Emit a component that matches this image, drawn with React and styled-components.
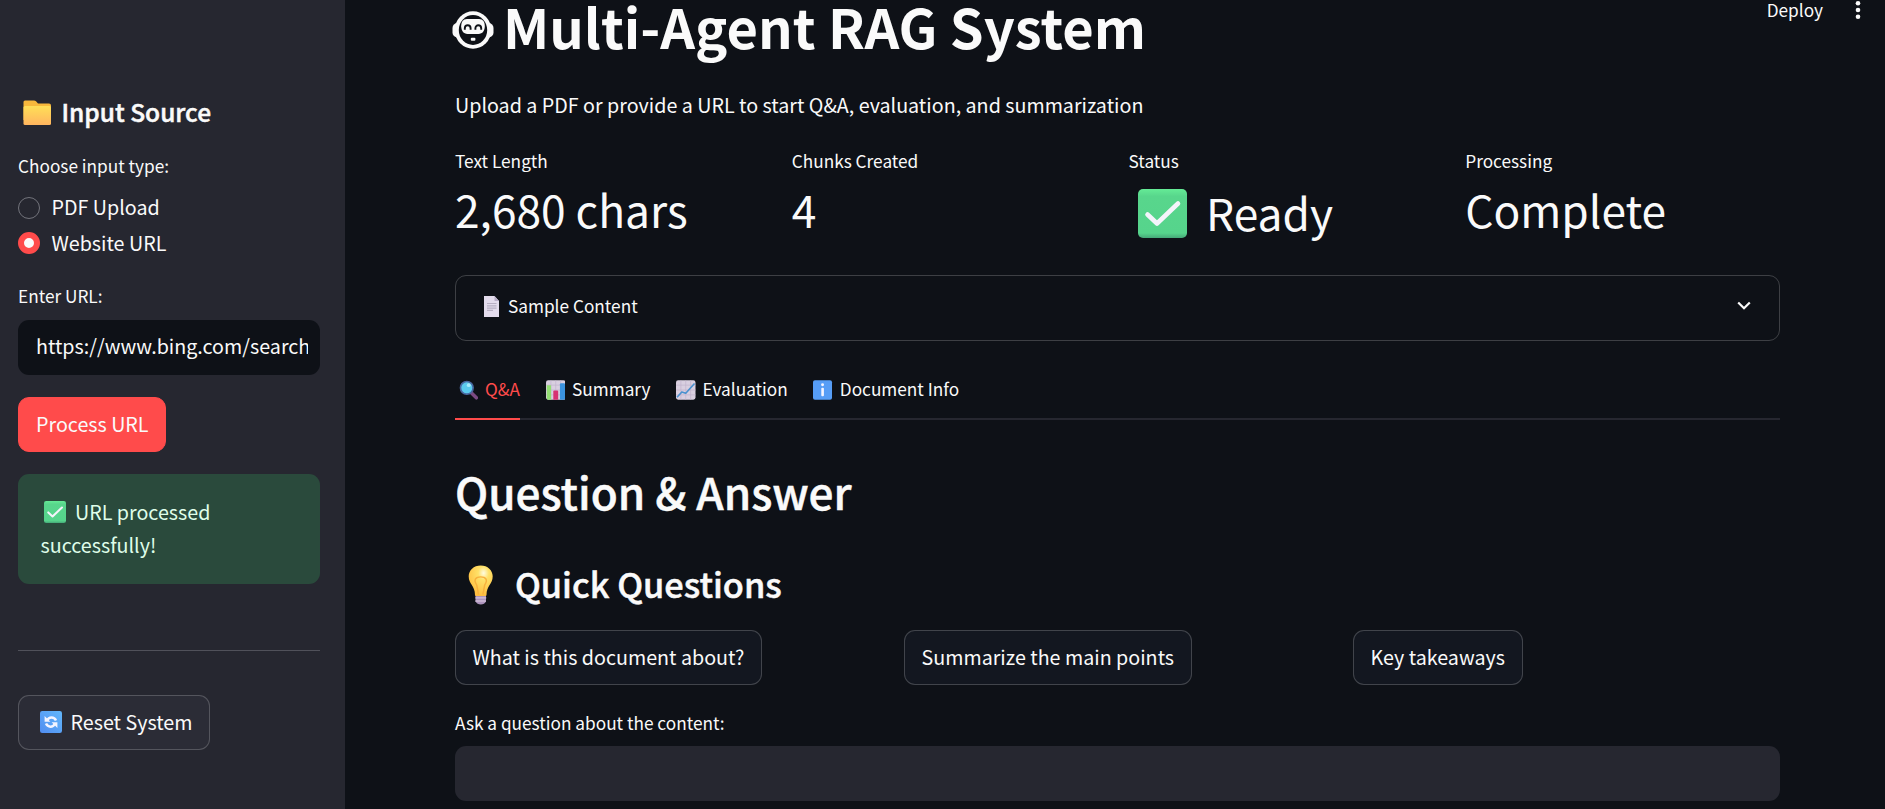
import React from 'react';
import styled, { createGlobalStyle, css } from 'styled-components';

const GlobalStyle = createGlobalStyle`
  * { box-sizing: border-box; }
  body {
    margin: 0;
    background: #0e1117;
    color: #fafafa;
    font-family: "Noto Sans CJK SC", "Noto Sans", sans-serif;
    font-size: 19.7px;
    overflow: hidden;
  }
  button, input { font: inherit; color: inherit; }
  svg { display: block; flex: none; }
`;

/* ---------- shell ---------- */

const Page = styled.div`
  display: flex;
  height: 809px;
  overflow: hidden;
`;

const Sidebar = styled.aside`
  flex: none;
  width: 345px;
  padding: 94px 25px 0 18px;
  background: #262730;
  display: flex;
  flex-direction: column;
  align-items: flex-start;
`;

const Main = styled.main`
  flex: 1;
  min-width: 0;
  padding: 0 105px 0 110px;
  display: flex;
  flex-direction: column;
`;

const Toolbar = styled.header`
  position: absolute;
  top: -2px;
  right: 23px;
  display: flex;
  align-items: center;
  gap: 31px;
  font-size: 17.24px;
  line-height: 18px;
  svg { margin-top: 1px; }
`;

/* ---------- text ---------- */

const semiBold = css`
  font-weight: 500;
  -webkit-text-stroke: 0.5px currentColor;
`;

const Title = styled.h1`
  margin: -1px 0 0 -3px;
  display: flex;
  align-items: center;
  gap: 9px;
  font-size: 54.25px;
  font-weight: 700;
  line-height: 54px;
  white-space: nowrap;
  svg { margin-top: 8px; }
`;

const Subtitle = styled.p`
  margin: 35px 0 0;
  line-height: 33px;
`;

const SectionTitle = styled.h2`
  margin: 41px 0 0;
  font-size: 44.05px;
  line-height: 60px;
  ${semiBold}
`;

const SubsectionTitle = styled.h3`
  margin: 39px 0 0;
  padding-left: 13px;
  display: flex;
  align-items: center;
  gap: 21px;
  font-size: 34.3px;
  line-height: 46px;
  ${semiBold}
  svg { margin-top: 3px; height: 40px; }
`;

const SidebarTitle = styled.h2`
  margin: 0;
  padding-left: 5px;
  display: flex;
  align-items: center;
  gap: 9.5px;
  font-size: 24.5px;
  line-height: 36px;
  ${semiBold}
  svg { margin-top: 2px; }
`;

const Label = styled.label`
  display: block;
  margin-top: ${(p) => p.$top}px;
  font-size: 17.24px;
  line-height: 24px;
`;

/* ---------- controls ---------- */

const RadioGroup = styled.div`
  margin-top: 13px;
  display: flex;
  flex-direction: column;
  gap: 2.5px;
`;

const RadioRow = styled.label`
  height: 33px;
  display: flex;
  align-items: center;
  gap: 11.5px;
  line-height: 31px;
  span { padding-bottom: 2px; }
`;

const RadioDot = styled.i`
  width: 22px;
  height: 22px;
  border-radius: 50%;
  border: ${(p) => (p.$checked ? '6.5px solid #ff4b4b' : '1.5px solid #72737b')};
  background: ${(p) => (p.$checked ? '#fafafa' : 'transparent')};
`;

const TextField = styled.input`
  width: 100%;
  height: 55px;
  margin-top: ${(p) => p.$top}px;
  padding: 0 12px 4px 18px;
  border: 0;
  border-radius: 11px;
  outline: 0;
  background: ${(p) => (p.$dark ? '#0e1117' : '#262730')};
`;

const Button = styled.button`
  height: 55px;
  padding: 0 16.5px 2px;
  display: inline-flex;
  align-items: center;
  gap: 8.5px;
  white-space: nowrap;
  border-radius: 11px;
  border: 1px solid ${(p) => (p.$primary ? '#ff4b4b' : 'rgba(250, 250, 250, 0.2)')};
  background: ${(p) => (p.$primary ? '#ff4b4b' : '#131720')};
`;

const ProcessButton = styled(Button)`
  margin-top: 22px;
  width: 148px;
  padding-left: 17px;
`;

const ResetButton = styled(Button)`
  margin-top: 44px;
  width: 192px;
  padding-left: 21px;
  background: #2b2c36;
`;

const Alert = styled.div`
  width: 100%;
  height: 110px;
  margin-top: 22px;
  padding: 21px 22.5px;
  border-radius: 11px;
  background: #2a4a3c;
  color: #dffde9;
  line-height: 33px;
  svg {
    display: inline-block;
    vertical-align: -3px;
    margin: 0 9px 0 3.5px;
  }
`;

const Divider = styled.hr`
  width: 100%;
  height: 1px;
  margin: 66px 0 0;
  border: 0;
  background: #50515a;
`;

/* ---------- main content ---------- */

const Metrics = styled.section`
  margin-top: 28px;
  display: grid;
  grid-template-columns: repeat(4, 1fr);
  column-gap: 22px;
`;

const MetricValue = styled.div`
  margin-top: 6px;
  height: 60px;
  display: flex;
  align-items: center;
  gap: 19.5px;
  padding-left: ${(p) => (p.$icon ? 9 : 0)}px;
  padding-top: ${(p) => (p.$icon ? 6 : 0)}px;
  font-size: 44.3px;
  line-height: 60px;
  white-space: nowrap;
  svg { margin-top: 2px; }
`;

const Expander = styled.div`
  margin-top: 36px;
  height: 66px;
  padding: 0 28px 4px;
  display: flex;
  align-items: center;
  gap: 9px;
  border: 1px solid rgba(250, 250, 250, 0.2);
  border-radius: 11px;
  font-size: 17.24px;
  line-height: 24px;
  > :last-child { margin-left: auto; }
`;

const Tabs = styled.nav`
  margin-top: 36px;
  height: 43px;
  display: flex;
  gap: 22px;
  box-shadow: inset 0 -2px #262730;
`;

const Tab = styled.div`
  height: 43px;
  padding-left: 3.5px;
  display: flex;
  align-items: flex-start;
  gap: 7px;
  font-size: 17.24px;
  line-height: 24px;
  color: ${(p) => (p.$active ? '#ff4b4b' : 'inherit')};
  border-bottom: 2px solid ${(p) => (p.$active ? '#ff4b4b' : 'transparent')};
  svg { margin-top: 3px; }
`;

const QuickRow = styled.div`
  margin-top: 24px;
  display: grid;
  grid-template-columns: repeat(3, 1fr);
  column-gap: 22px;
  justify-items: start;
`;

/* ---------- icons ---------- */

const RobotIcon = () => (
  <svg width="42" height="38" viewBox="0 0 42 38">
    <rect x="0.5" y="12" width="41" height="14.5" rx="5" fill="#fafafa" />
    <ellipse cx="21" cy="19" rx="18.2" ry="18.8" fill="#fafafa" />
    <ellipse cx="21" cy="19" rx="14.2" ry="15" fill="#0e1117" />
    <path d="M15 8h12c4 0 5.800 3 5.800 7.300s-2.300 7.700-6.300 7.700h-11c-4 0-6.300-3.400-6.300-7.700S11 8 15 8Z" fill="#fafafa" />
    <path d="M12.800 18.800v-1.600a2.900 2.900 0 0 1 5.800 0v1.600M23.400 18.800v-1.600a2.900 2.900 0 0 1 5.800 0v1.600" fill="none" stroke="#0e1117" strokeWidth="1.900" />
    <rect x="18.800" y="26.800" width="4.600" height="3" rx="1" fill="#fafafa" />
  </svg>
);

const FolderIcon = () => (
  <svg width="29" height="26" viewBox="0 0 29 26">
    <defs>
      <linearGradient id="folder" x1="0" y1="0" x2="0" y2="1">
        <stop offset="0" stopColor="#ffdf57" />
        <stop offset="1" stopColor="#ffb55f" />
      </linearGradient>
    </defs>
    <path d="M.5 2Q.5.500 2 .5h9q1.200 0 2 .8l2 2.200h11q2 0 2 2V20H.5Z" fill="#f8b83c" />
    <rect x=".5" y="6" width="27.500" height="19" rx="1.500" fill="url(#folder)" />
  </svg>
);

const CheckIcon = ({ size }) => (
  <svg width={size} height={size} viewBox="0 0 49 49">
    <defs>
      <linearGradient id="check" x1="0" y1="0" x2="0" y2="1">
        <stop offset="0" stopColor="#65eb96" />
        <stop offset=".15" stopColor="#58d68c" />
        <stop offset=".9" stopColor="#56d48c" />
        <stop offset="1" stopColor="#45a878" />
      </linearGradient>
    </defs>
    <rect width="49" height="49" rx="5" fill="url(#check)" />
    <path d="M9.500 25.500 19 34.500 40 14.500" fill="none" stroke="#f4f4fb" strokeWidth="4.600" strokeLinecap="round" strokeLinejoin="round" />
  </svg>
);

const ResetIcon = () => (
  <svg width="22" height="22" viewBox="0 0 22 22">
    <defs>
      <linearGradient id="reset" x1="1" y1="0" x2="0" y2="1">
        <stop offset="0" stopColor="#62b7fb" />
        <stop offset="1" stopColor="#518df0" />
      </linearGradient>
    </defs>
    <rect width="22" height="22" rx="2.200" fill="url(#reset)" />
    <path d="M7.300 9.300C8.800 5.800 14 5.300 16 9.500M14.700 13C13 16.500 8 16.700 6 12.500" fill="none" stroke="#f3f4ff" strokeWidth="2.500" />
    <path d="M4.600 5v5.800h5.800ZM17.400 17v-5.800h-5.800Z" fill="#f3f4ff" />
  </svg>
);

const DocumentIcon = () => (
  <svg width="15" height="21" viewBox="0 0 15 21">
    <path d="M0 0h10.500L15 5v16H0Z" fill="#e3dced" />
    <path d="M10.500 0v5H15Z" fill="#b9aec8" />
    <path d="M3 7.500h9.500M3 9.800h9.500M3 12.100h9.500M3 14.400h6" stroke="#b7afc3" strokeWidth="1.200" />
  </svg>
);

const SearchIcon = () => (
  <svg width="19.500" height="20" viewBox="0 0 20 20">
    <path d="m12.300 12.500 5.500 5.500" stroke="#7b4a83" strokeWidth="3.600" strokeLinecap="round" />
    <circle cx="8" cy="7.800" r="6.500" fill="#5bcbee" stroke="#4a69a2" strokeWidth="1.700" />
    <circle cx="10" cy="5" r="2" fill="#a7ecfb" />
  </svg>
);

const ChartGrid = () => (
  <>
    <rect width="20" height="20" rx="2.200" fill="#d9cfe0" />
    <path d="M0 5h20M0 10h20M0 15h20M5 0v20M10 0v20M15 0v20" stroke="#bfb2cb" strokeWidth=".7" />
  </>
);

const BarChartIcon = () => (
  <svg width="19.500" height="20" viewBox="0 0 20 20">
    <ChartGrid />
    <path d="M.8 5h4.400v15H2Q.8 20 .8 18.500Z" fill="#93de73" />
    <path d="M7.500 20v-8.500q0-1 1-1h3q1 0 1 1V20Z" fill="#d73172" />
    <path d="M14.300 20V4q0-1 1-1h3.200q1 0 1 1v14.500q0 1.500-1.500 1.500Z" fill="#3b93df" />
  </svg>
);

const LineChartIcon = () => (
  <svg width="19.500" height="20" viewBox="0 0 20 20">
    <ChartGrid />
    <path d="M1 17.500 6 12l4 1.300 9-10" fill="none" stroke="#4a91cf" strokeWidth="1.700" strokeLinejoin="round" />
  </svg>
);

const InfoIcon = () => (
  <svg width="19.500" height="20" viewBox="0 0 20 20">
    <rect width="19.500" height="20" rx="2" fill="#569df6" />
    <circle cx="9.800" cy="4.600" r="1.500" fill="#f4f4ff" />
    <rect x="8.500" y="7.700" width="2.700" height="8.800" rx="1" fill="#f4f4ff" />
  </svg>
);

const BulbIcon = () => (
  <svg width="26" height="40" viewBox="0 0 26 44" preserveAspectRatio="none">
    <defs>
      <radialGradient id="bulb" cx=".62" cy=".25" r=".75">
        <stop offset="0" stopColor="#fffbe0" />
        <stop offset=".3" stopColor="#ffe168" />
        <stop offset="1" stopColor="#ffbd3f" />
      </radialGradient>
    </defs>
    <path d="M7.500 33h10.500v7q-1.500 3.500-5.200 3.500T7.500 40Z" fill="#ad94bd" />
    <path d="M7.300 36.200h11M7.300 39.600h10.500" stroke="#e0d0e5" strokeWidth="1" />
    <path d="M12.700.5c7 0 12 5.300 12 12 0 8.500-6.200 10.500-6.200 20.500q0 1-1.200 1H8.200Q7 34 7 33C7 23 .7 21 .7 12.500.7 5.800 5.700.5 12.700.5Z" fill="url(#bulb)" />
    <path d="M10.500 32.500 8.700 22C5 16 8 13 12.700 13s7.700 3 4 9l-1.800 10.500" fill="none" stroke="#f8b13d" strokeWidth="1.500" />
  </svg>
);

const ChevronIcon = () => (
  <svg width="14" height="10" viewBox="0 0 14 10">
    <path d="m1.200 1.500 5.800 5.800 5.800-5.800" fill="none" stroke="#fafafa" strokeWidth="2.200" />
  </svg>
);

const MenuDots = () => (
  <svg width="8" height="22" viewBox="0 0 8 22">
    <g fill="#fafafa">
      <circle cx="4" cy="4.200" r="2.300" />
      <circle cx="4" cy="11" r="2.300" />
      <circle cx="4" cy="17.800" r="2.300" />
    </g>
  </svg>
);

/* ---------- data ---------- */

const metrics = [
  { label: 'Text Length', value: '2,680 chars' },
  { label: 'Chunks Created', value: '4' },
  { label: 'Status', value: 'Ready', icon: true },
  { label: 'Processing', value: 'Complete' },
];

const tabs = [
  { label: 'Q&A', Icon: SearchIcon },
  { label: 'Summary', Icon: BarChartIcon },
  { label: 'Evaluation', Icon: LineChartIcon },
  { label: 'Document Info', Icon: InfoIcon },
];

const questions = ['What is this document about?', 'Summarize the main points', 'Key takeaways'];

export default function App() {
  return (
    <Page>
      <GlobalStyle />
      <Sidebar>
        <SidebarTitle><FolderIcon />Input Source</SidebarTitle>
        <Label as="div" $top={24}>Choose input type:</Label>
        <RadioGroup>
          <RadioRow><RadioDot /><span>PDF Upload</span></RadioRow>
          <RadioRow><RadioDot $checked /><span>Website URL</span></RadioRow>
        </RadioGroup>
        <Label $top={24.5}>Enter URL:</Label>
        <TextField $top={12} $dark readOnly value="https://www.bing.com/search?q=rag" />
        <ProcessButton $primary>Process URL</ProcessButton>
        <Alert><CheckIcon size={22} />URL processed successfully!</Alert>
        <Divider />
        <ResetButton><ResetIcon />Reset System</ResetButton>
      </Sidebar>

      <Main>
        <Title><RobotIcon />Multi-Agent RAG System</Title>
        <Subtitle>Upload a PDF or provide a URL to start Q&amp;A, evaluation, and summarization</Subtitle>
        <Metrics>
          {metrics.map((m) => (
            <div key={m.label}>
              <Label as="div" $top={0}>{m.label}</Label>
              <MetricValue $icon={m.icon}>
                {m.icon && <CheckIcon size={49} />}
                {m.value}
              </MetricValue>
            </div>
          ))}
        </Metrics>
        <Expander><DocumentIcon /><span>Sample Content</span><ChevronIcon /></Expander>
        <Tabs>
          {tabs.map(({ label, Icon }, i) => (
            <Tab key={label} $active={i === 0}><Icon />{label}</Tab>
          ))}
        </Tabs>
        <SectionTitle>Question &amp; Answer</SectionTitle>
        <SubsectionTitle><BulbIcon />Quick Questions</SubsectionTitle>
        <QuickRow>
          {questions.map((q) => <Button key={q}>{q}</Button>)}
        </QuickRow>
        <Label $top={26}>Ask a question about the content:</Label>
        <TextField $top={11} />
      </Main>

      <Toolbar><span>Deploy</span><MenuDots /></Toolbar>
    </Page>
  );
}
